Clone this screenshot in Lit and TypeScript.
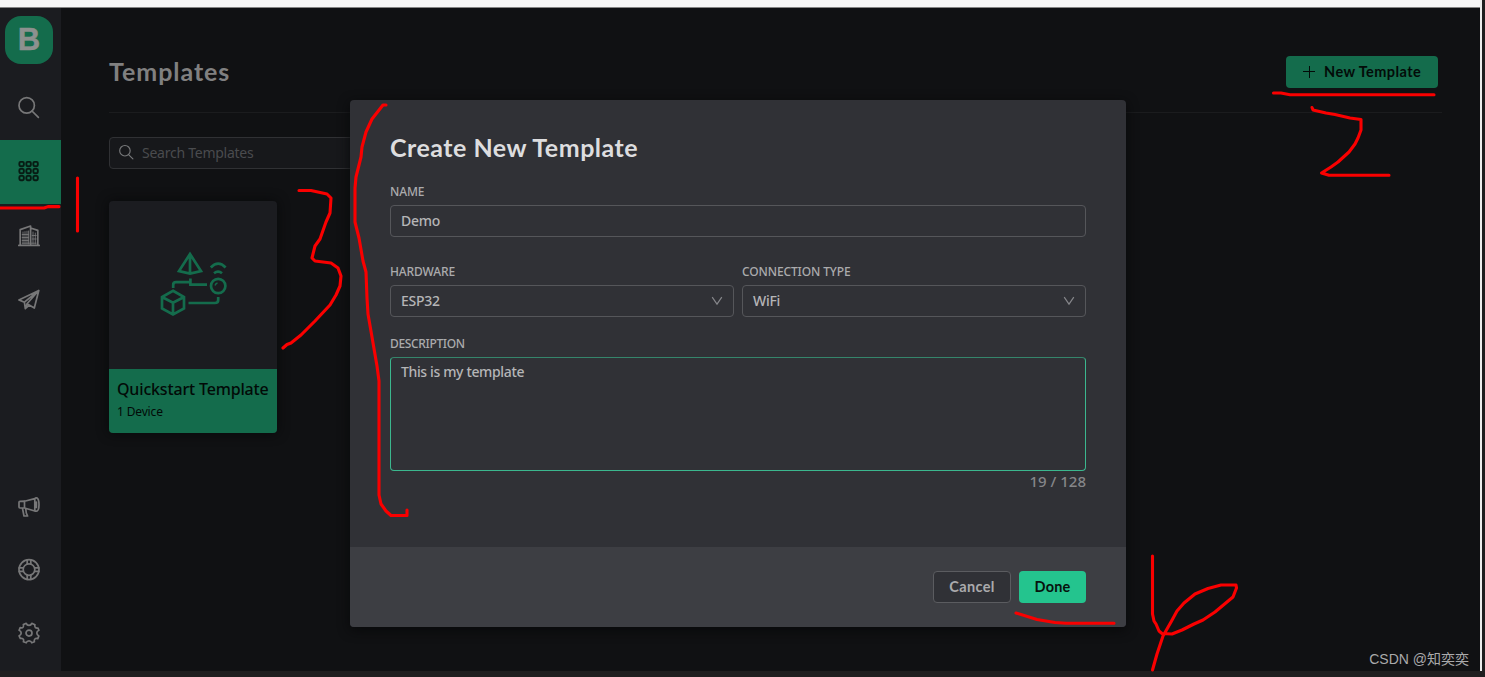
import { LitElement, html, css, svg } from "lit";
import { customElement, property } from "lit/decorators.js";

const icons: Record<string, unknown> = {
  search: svg`<circle cx="8.7" cy="8.4" r="7.7"/><path d="M14 14 20.4 20.4"/>`,
  grid: svg`${[0, 7, 14].map((y) => [0, 7, 14].map((x) => svg`<rect x=${x + 1.4} y=${y + 0.9} width="4.4" height="4.4" rx="1.2" stroke-width="1.9"/>`))}`,
  building: svg`<path d="M.8 20.4h20.4M2.2 20V4.6L12.6 1v19M12.6 3l7.2 2.4V20"/><path d="M5 7v12M7 6.6V19M9 6.2V19M10.6 6V19M15 7v12M17.3 8v11M4.2 9.5h6.4M4.2 12.5h6.4M4.2 15.5h6.4M14.2 10.5h4M14.2 14h4M4.2 18.2h14" stroke-width=".9"/>`,
  plane: svg`<path d="M20.8 1.5 .9 10.9 6.4 13.2 20.8 1.5 9 14.7 16.3 19 20.8 1.5zM6.4 13.2 7.3 19.7 9 14.7M7.3 19.7 11.2 16.1"/>`,
  horn: svg`<path d="M1 6.2Q1 5.4 2 5.3L6.5 5.2 16.8 2.6V15L6.5 12H2Q1 11.9 1 11zM6.5 5.2V12M16.8 2.6Q17.2 1.8 19 1.9C20.8 3 21 6 21 8.7S20.6 14.3 19.2 15Q17.4 15.4 16.8 15M18.4 6v5.4M4.4 12 6 20H9.6L8.3 17 7.7 12.5"/>`,
  ring: svg`<circle cx="11" cy="10.6" r="10"/><circle cx="11" cy="10.6" r="5.8"/><path d="M9.2.8v4M12.8.8v4M9.2 16.2v4.2M12.8 16.2v4.2M1.2 8.8h4M1.2 12.4h4M16.6 8.8h4.2M16.6 12.4h4.2"/>`,
  gear: svg`<circle cx="11" cy="11.1" r="3"/><path d="M7.6 1.5 8.2 1.4Q9 3.4 11 3.4T13.8 1.4L17 2.7Q16.2 4.6 17.3 5.5T20 6L20.9 8.3Q18.8 9.2 18.8 11T20.9 13.9L19.8 16.6Q17.9 16 16.9 17T16.4 19.8L13.8 20.8Q13 18.8 11 18.8T8.2 20.8L5.4 19.7Q6.2 17.8 5 16.9T2.3 16.5L1.1 13.8Q3.2 13 3.2 11.1T1.1 8.3L2.2 5.6Q4.2 6.3 5.1 5.3T5.3 2.5L8.2 1.4"/>`,
};

@customElement("nav-icon")
class NavIcon extends LitElement {
  @property() name = "search";
  @property({ type: Number }) size = 22;
  static styles = css`
    :host { display: block; line-height: 0; }
    svg { fill: none; stroke: currentColor; stroke-width: 1.7; stroke-linejoin: round; stroke-linecap: round; overflow: visible; }
  `;
  render() {
    return html`<svg width=${this.size} height=${this.size} viewBox="0 0 22 22">${icons[this.name]}</svg>`;
  }
}

@customElement("app-root")
class AppRoot extends LitElement {
  static styles = css`
    :host {
      display: block; position: relative; width: 1485px; height: 677px; overflow: hidden;
      background: #1f1e1f; color: #808080; font: 14px/20px "Noto Sans", sans-serif; box-sizing: border-box;
    }
    * { box-sizing: border-box; }
    .window { display: grid; grid-template-rows: 8px 663px; width: 1482px; border-right: 2px solid #ececec; }
    .strip { background: #f7f7f7; border-bottom: 1px solid #858585; }
    .body { display: grid; grid-template-columns: 61px 1fr; background: #101113; }
    .side { background: #1b1c20; display: flex; flex-direction: column; color: #777778; }
    .logo {
      width: 48px; height: 48px; margin: 8px 0 12px 5px; border-radius: 16px; background: #146c4c; color: #8e918f;
      font: bold 31px/48px "Liberation Sans", sans-serif; text-align: center; -webkit-text-stroke: .5px #8e918f;
    }
    .item { height: 64px; display: flex; align-items: center; padding-left: 18px; }
    .active { background: #146c4c; color: #071b13; }
    .spacer { flex: 1; }
    .low { height: 63px; }
    .last { margin-bottom: 6px; }
    .main { padding: 48px 38px 0 48px; }
    .head { height: 57px; display: flex; justify-content: space-between; border-bottom: 1px solid #1b1c1e; }
    .title { margin: 0; font: 700 25px/30px Lato, sans-serif; color: #808080; letter-spacing: .95px; }
    .new {
      width: 152px; height: 32px; margin-right: 4px; border-radius: 4px; background: #146c4c; color: #030b08;
      display: flex; align-items: center; gap: 9px; padding-left: 17px; font: 700 14.5px/32px Lato, sans-serif;
      letter-spacing: .43px; white-space: nowrap;
    }
    .query {
      width: 320px; height: 32px; margin-top: 23.5px; border: 1px solid #303134; border-radius: 4px; background: #17181b;
      display: flex; align-items: center; gap: 8px; padding-left: 9px; color: #4a4b4e; letter-spacing: -.25px;
    }
    .query nav-icon { color: #77787a; }
    .card { width: 168px; height: 232px; margin-top: 32px; border-radius: 4px; background: #1b1c20; overflow: hidden; box-shadow: 0 0 12px #08090a; }
    .art { height: 168px; display: grid; place-items: center; }
    .art svg { fill: none; stroke: #146c4c; stroke-width: 2.7; display: block; overflow: visible; }
    .info { height: 64px; padding: 10px 8px; background: #146c4c; color: #020a07; white-space: nowrap; }
    .cardname { font-size: 16px; line-height: 21px; font-weight: 500; letter-spacing: -.17px; }
    .count { font-size: 12px; line-height: 23px; letter-spacing: -.15px; }
    .modal {
      position: absolute; left: 350px; top: 100px; width: 776px; height: 527px; border-radius: 4px;
      background: #303136; color: #b5b5b7; box-shadow: 0 3px 12px #08090a; overflow: hidden;
      display: grid; grid-template-rows: 447px 80px;
    }
    .form { padding: 32px 40px 0; }
    .heading { margin: 0; font: 700 25px/30px Lato, sans-serif; color: #dddddf; letter-spacing: .5px; white-space: nowrap; }
    .label { font-size: 12px; line-height: 16px; color: #ababad; white-space: nowrap; font-weight: 500; letter-spacing: -.12px; }
    .name { margin-top: 22px; }
    .field {
      height: 32px; margin-top: 5px; border: 1px solid #55565a; border-radius: 4px; padding: 0 10px;
      display: flex; align-items: center; justify-content: space-between; color: #b5b5b7; font-weight: 500; letter-spacing: -.25px;
    }
    .field svg { fill: none; stroke: #85868a; stroke-width: 1.2; }
    .row { display: grid; grid-template-columns: 344px 344px; gap: 8px; margin-top: 27px; }
    .desc { margin-top: 19px; letter-spacing: -.35px; }
    .area {
      height: 114px; margin-top: 5px; padding: 4px 10px; border: 1px solid #3bb78e; border-top-color: #35856b;
      border-radius: 4px; font-weight: 500; letter-spacing: -.36px;
    }
    .counter { text-align: right; color: #858689; font-size: 15px; line-height: 20px; font-weight: 500; }
    .foot { background: #3d3e43; display: flex; justify-content: flex-end; gap: 8px; padding: 24px 40px 0 0; }
    .btn { height: 32px; border-radius: 4px; font: 700 14.5px/30px Lato, sans-serif; text-align: center; letter-spacing: .35px; }
    .cancel { width: 78px; border: 1px solid #5b5c60; background: #303136; color: #aaaaac; }
    .done { width: 67px; line-height: 32px; background: #24c48e; color: #07130e; letter-spacing: .2px; }
    .ink { position: absolute; left: 0; top: 0; fill: none; stroke: #fa0000; stroke-width: 3.1; stroke-linecap: round; stroke-linejoin: round; pointer-events: none; }
    .mark { position: absolute; right: 16px; bottom: 8px; font: 14px/20px "Liberation Sans", "Noto Sans CJK SC", sans-serif; color: #aaaaab; white-space: nowrap; }
  `;

  private select(label: string, value: string) {
    return html`<div><div class="label">${label}</div>
      <div class="field"><span>${value}</span><svg width="12" height="10"><path d="M1.2 1.2 6 8.2 10.8 1.2"/></svg></div></div>`;
  }

  render() {
    return html`
      <div class="window">
        <div class="strip"></div>
        <div class="body">
          <nav class="side">
            <div class="logo">B</div>
            <div class="item"><nav-icon name="search"></nav-icon></div>
            <div class="item active"><nav-icon name="grid"></nav-icon></div>
            <div class="item"><nav-icon name="building"></nav-icon></div>
            <div class="item"><nav-icon name="plane"></nav-icon></div>
            <div class="spacer"></div>
            <div class="item low"><nav-icon name="horn"></nav-icon></div>
            <div class="item low"><nav-icon name="ring"></nav-icon></div>
            <div class="item last"><nav-icon name="gear"></nav-icon></div>
          </nav>
          <main class="main">
            <div class="head">
              <h1 class="title">Templates</h1>
              <div class="new"><svg width="12" height="12"><path d="M0 5.5h12M6.5 0v12" stroke="#030b08"/></svg><span>New Template</span></div>
            </div>
            <div class="query"><nav-icon name="search" size="15"></nav-icon><span>Search Templates</span></div>
            <div class="card">
              <div class="art">
                <svg width="68" height="66" viewBox="159 252 68 66">
                  <path d="M190 254 179 271 190 273.5 201 271ZM190 254V273"/>
                  <path d="M173.2 288V285Q173.2 282.2 176 282.2H190.4V278.5M190.4 282V284.7H207M218.2 297V300Q218.2 303 215 303H188.5"/>
                  <path d="M173 290.8 184 297V308.5L173 314.5 162 308.5V297ZM162 297 173 302.8 184 297M173 302.8V314"/>
                  <circle cx="218.2" cy="286" r="7.2"/><path d="M215 285.5Q215.5 283.5 217.5 283" stroke-width="1.3"/>
                  <path d="M210.8 267.5Q218.2 259.8 225.6 267.5M214 273.3Q218.2 270 222 273.3"/>
                </svg>
              </div>
              <div class="info"><div class="cardname">Quickstart Template</div><div class="count">1 Device</div></div>
            </div>
          </main>
        </div>
      </div>
      <section class="modal">
        <div class="form">
          <h2 class="heading">Create New Template</h2>
          <div class="label name">NAME</div>
          <div class="field"><span>Demo</span></div>
          <div class="row">${this.select("HARDWARE", "ESP32")}${this.select("CONNECTION TYPE", "WiFi")}</div>
          <div class="label desc">DESCRIPTION</div>
          <div class="area">This is my template</div>
          <div class="counter">19 / 128</div>
        </div>
        <div class="foot"><div class="btn cancel">Cancel</div><div class="btn done">Done</div></div>
      </section>
      <svg class="ink" width="1485" height="677">
        <path d="M0 208H44L48 206.6H59M77.5 178V231"/>
        <path d="M299 190.5H311L327 194 331 198 330 213 326 222 320 239 315 246 312 258 315 261 331 263 338 268 341 276 340 286 336 295 330 305 315 321 301 335 291 343 287 344.5 283 348"/>
        <path d="M386 105 383 105 372 119 366 132 362 147 361 157 356 177 355 188 355 222 359 238 363 261 366 272 367 298 368 314 372 337 377 366 379 381 379 495 381 504 386 511 391 515.5H407V510"/>
        <path d="M1273.5 93H1281L1290 94.7H1434M1312 107.5 1313 110 1326 113 1335 114.5 1350 118 1361 119.5V130L1358 138 1355 144 1349 152 1338 162 1331 167 1321.5 173 1329 175.3H1389"/>
        <path d="M1016 613 1037 619.5 1055 622.5 1066 623.3H1114"/>
        <path d="M1152.5 556V614L1154 621 1156 624 1159 631 1162 633.5 1172 634 1182 630 1194 624 1203 620 1215 612 1233 597 1236.5 588 1236 585H1221L1208 588.5 1195 594 1184 603 1177 611 1171 622 1163 636 1157 654 1152.5 670"/>
      </svg>
      <div class="mark">CSDN @知奕奕</div>
    `;
  }
}
